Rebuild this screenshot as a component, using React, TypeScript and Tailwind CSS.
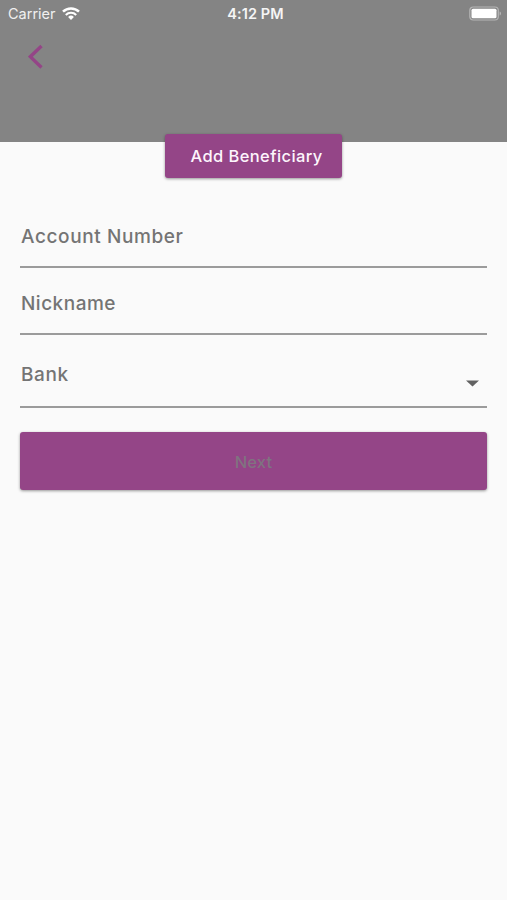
import React from "react";
import clsx from "clsx";

interface FieldProps {
  label: string;
  className?: string;
  labelClassName?: string;
  children?: React.ReactNode;
}

const WifiIcon = () => (
  <svg width="18" height="13" viewBox="0 0 18 13" fill="none" className="mb-0.5">
    <path d="M1 4.7a11.4 11.4 0 0 1 16 0" stroke="white" strokeWidth="2.5" />
    <path d="M3.8 7.9a7.4 7.4 0 0 1 10.4 0" stroke="white" strokeWidth="2.1" />
    <path d="M6.1 10a4.1 4.1 0 0 1 5.8 0L9 12.9z" fill="white" />
  </svg>
);

const BatteryIcon = () => (
  <svg width="34" height="16" viewBox="0 0 34 16" fill="none">
    <rect x="0.8" y="1" width="28.5" height="13" rx="3.5" stroke="#b5b5b5" strokeWidth="1.2" />
    <rect x="2.5" y="2.8" width="25" height="9.4" rx="1.5" fill="white" />
    <path d="M30.6 5.5v4c.9-.3 1.4-1 1.4-2s-.5-1.7-1.4-2z" fill="#b5b5b5" />
  </svg>
);

const StatusBar = () => (
  <div className="grid h-7 grid-cols-3 items-center pl-2 pr-1 text-white">
    <div className="flex items-center gap-1.5">
      <span className="text-[14.5px] text-[#f0f0f0]">Carrier</span>
      <WifiIcon />
    </div>
    <span className="text-center text-[14.5px] font-semibold tracking-[0.1px] text-[#f5f5f5]">
      4:12 PM
    </span>
    <div className="flex justify-end">
      <BatteryIcon />
    </div>
  </div>
);

const Field = ({ label, className, labelClassName, children }: FieldProps) => (
  <div
    className={clsx(
      "flex justify-between border-b-2 border-[#9b9b9b] text-[#747474]",
      className
    )}
  >
    <span
      className={clsx(
        "pl-px pt-px text-[19px] font-medium leading-6",
        labelClassName
      )}
    >
      {label}
    </span>
    {children}
  </div>
);

export default function App() {
  return (
    <main className="min-h-screen bg-[#fafafa] font-['Inter',sans-serif]">
      <header className="h-[142px] bg-[#848484]">
        <StatusBar />
        <button className="ml-7 mt-4 block" aria-label="Back">
          <svg width="16" height="25" viewBox="0 0 16 25" fill="none">
            <path d="M13.5 2 2.3 12.7l11.2 10.7" stroke="#944587" strokeWidth="3.4" />
          </svg>
        </button>
      </header>

      <div className="-mt-2 flex justify-center">
        <h1 className="h-11 w-[177px] rounded-[3px] bg-[#944587] pl-[25.5px] text-[16.5px] font-medium leading-[45px] text-[#fdf5fc] shadow-[0_1px_3px_rgba(0,0,0,0.4)]">
          <span className="whitespace-nowrap tracking-[0.4px]">Add Beneficiary</span>
        </h1>
      </div>

      <form className="px-5 pt-[46px]">
        <Field label="Account Number" className="h-11" labelClassName="tracking-[0.6px]" />
        <Field label="Nickname" className="mt-[23px] h-11" labelClassName="tracking-[0.5px]" />
        <Field label="Bank" className="mt-[27px] h-[46px]" labelClassName="tracking-[0.6px]">
          <svg className="mr-2 mt-[18px]" width="13" height="7" viewBox="0 0 13 7">
            <path d="M0 .5h13l-6.5 6z" fill="#616161" />
          </svg>
        </Field>
        <button
          type="button"
          className="mt-6 block h-[58px] w-full rounded-[3px] bg-[#944587] pt-0.5 text-[16.5px] font-medium tracking-[0.2px] text-[#807380] shadow-[0_1px_3px_rgba(0,0,0,0.4)]"
        >
          Next
        </button>
      </form>
    </main>
  );
}
